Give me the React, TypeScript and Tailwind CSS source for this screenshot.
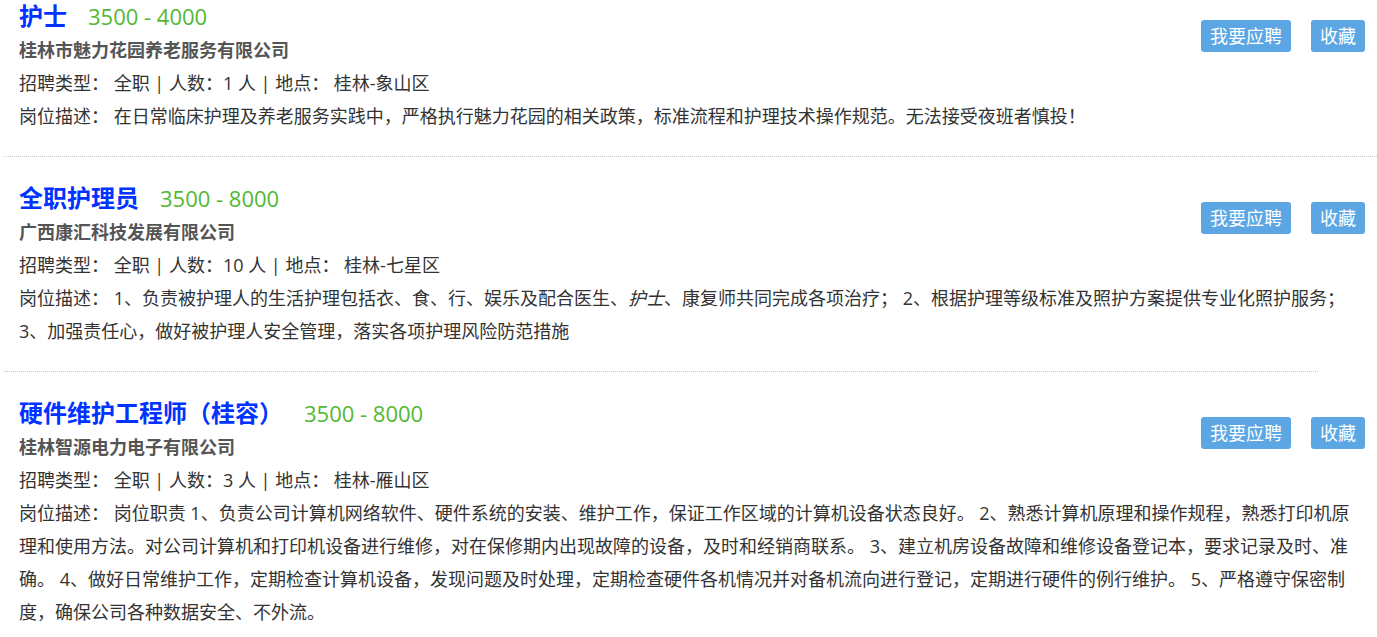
import React from 'react';

type Job = {
  title: string;
  salary: string;
  company: string;
  count: number;
  place: string;
  desc: React.ReactNode;
};

const jobs: Job[] = [
  {
    title: '护士',
    salary: '3500 - 4000',
    company: '桂林市魅力花园养老服务有限公司',
    count: 1,
    place: '桂林-象山区',
    desc: '在日常临床护理及养老服务实践中，严格执行魅力花园的相关政策，标准流程和护理技术操作规范。无法接受夜班者慎投！',
  },
  {
    title: '全职护理员',
    salary: '3500 - 8000',
    company: '广西康汇科技发展有限公司',
    count: 10,
    place: '桂林-七星区',
    desc: (
      <>
        1、负责被护理人的生活护理包括衣、食、行、娱乐及配合医生、<em>护士</em>、康复师共同完成各项治疗； 2、根据护理等级标准及照护方案提供专业化照护服务； 3、加强责任心，做好被护理人安全管理，落实各项护理风险防范措施
      </>
    ),
  },
  {
    title: '硬件维护工程师（桂容）',
    salary: '3500 - 8000',
    company: '桂林智源电力电子有限公司',
    count: 3,
    place: '桂林-雁山区',
    desc: '岗位职责 1、负责公司计算机网络软件、硬件系统的安装、维护工作，保证工作区域的计算机设备状态良好。 2、熟悉计算机原理和操作规程，熟悉打印机原理和使用方法。对公司计算机和打印机设备进行维修，对在保修期内出现故障的设备，及时和经销商联系。 3、建立机房设备故障和维修设备登记本，要求记录及时、准确。 4、做好日常维护工作，定期检查计算机设备，发现问题及时处理，定期检查硬件各机情况并对备机流向进行登记，定期进行硬件的例行维护。 5、严格遵守保密制度，确保公司各种数据安全、不外流。',
  },
];

function JobItem({ job, first }: { job: Job; first?: boolean }) {
  return (
    <div className="relative ml-[4px] pl-[15px] pr-[12px] pt-[23px] pb-[23px]">
      {first && (
        <div className="absolute right-[14px] top-[8px] text-[18px] leading-none text-[#e06c00]">2022-04-18</div>
      )}
      <div className="flex justify-between">
        <div>
          <div className="flex items-center h-[36px]">
            <span className="text-[24px] font-bold text-[#0033ff] leading-[36px]">{job.title}</span>
            <span className="ml-[21px] text-[22px] text-[#52b833] leading-[36px]">{job.salary}</span>
          </div>
          <div className="text-[18px] font-bold text-[#555] leading-[33px]">{job.company}</div>
          <div className="text-[18px] text-[#333] leading-[33px]">
            招聘类型： 全职 | 人数：{job.count} 人 | 地点： {job.place}
          </div>
        </div>
        <div className="flex gap-[20px] mt-[22px] h-[32px]">
          <button className="h-[32px] px-[9px] rounded-[3px] bg-[#5ca6e4] text-white text-[18px] leading-[32px]">我要应聘</button>
          <button className="h-[32px] px-[9px] rounded-[3px] bg-[#5ca6e4] text-white text-[18px] leading-[32px]">收藏</button>
        </div>
      </div>
      <p className="pr-[3px] text-[18px] text-[#333] leading-[33px]">岗位描述： {job.desc}</p>
    </div>
  );
}

export default function App() {
  return (
    <div className="w-[1377px] h-[637px] overflow-hidden bg-white font-['Open_Sans','Noto_Sans_CJK_SC',sans-serif]">
      <div className="-mt-[25px]">
        <JobItem job={jobs[0]} first />
        <div className="ml-[4px] border-t border-dotted border-[#c8c8c8]" />
        <JobItem job={jobs[1]} />
        <div className="ml-[4px] mr-[59px] border-t border-dotted border-[#c8c8c8]" />
        <JobItem job={jobs[2]} />
      </div>
    </div>
  );
}
